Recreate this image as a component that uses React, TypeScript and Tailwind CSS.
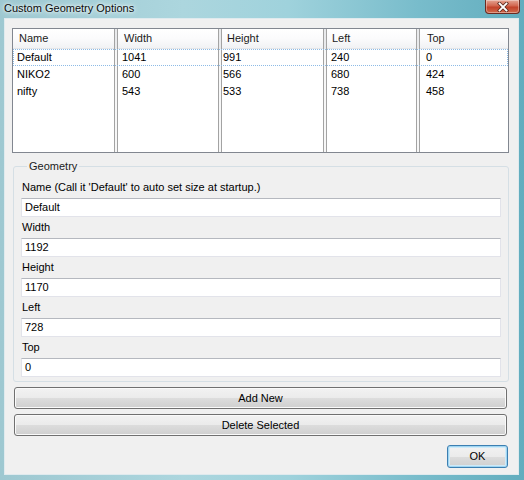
import React from "react";

const cols = [
  { name: "Name", w: "w-[101px]", hp: "pl-[6px]", dp: "pl-[4px]" },
  { name: "Width", w: "w-[100px]", hp: "pl-[6px]", dp: "pl-[4px]" },
  { name: "Height", w: "w-[101px]", hp: "pl-[5px]", dp: "pl-[1px]" },
  { name: "Left", w: "w-[89px]", hp: "pl-[5px]", dp: "pl-[4px]" },
  { name: "Top", w: "w-[88px]", hp: "pl-[7px]", dp: "pl-[6px]" },
];

const rows = [
  ["Default", "1041", "991", "240", "0"],
  ["NIKO2", "600", "566", "680", "424"],
  ["nifty", "543", "533", "738", "458"],
];

const fields = [
  ["Name (Call it 'Default' to auto set size at startup.)", "Default"],
  ["Width", "1192"],
  ["Height", "1170"],
  ["Left", "728"],
  ["Top", "0"],
];

const btn =
  "flex items-center justify-center rounded-[3px] border border-[#707070] bg-[linear-gradient(to_bottom,#f2f2f2_0%,#ebebeb_50%,#dddddd_50%,#cfcfcf_100%)] shadow-[inset_0_0_0_1px_#fafafa] text-[#000]";

export default function App() {
  return (
    <div
      className="w-[524px] h-[480px] flex flex-col overflow-hidden bg-[linear-gradient(90deg,#9ec8d1_0%,#acd6de_35%,#9fd2dc_55%,#78bccb_80%,#62adbe_100%)] text-[11px] leading-none text-black"
      style={{ fontFamily: '"Liberation Sans", Arial, sans-serif' }}
    >
      {/* title bar */}
      <div className="h-[18px] flex items-start shrink-0">
        <div className="pl-[4px] pt-[2px] text-[11px] leading-[12px] text-[#0b0b0b] [text-shadow:0_0_6px_#ffffff,0_0_3px_#ffffff]">
          Custom Geometry Options
        </div>
        <div className="flex-1" />
        <div className="mr-[4px] w-[35px] h-[14px] rounded-b-[4px] border border-t-0 border-[#6b2a20] bg-[linear-gradient(to_bottom,#e4a594_0%,#d2664f_45%,#c2432b_55%,#cf6a4c_100%)] shadow-[inset_0_0_0_1px_rgba(255,255,255,0.35)] flex items-center justify-center">
          <svg width="12" height="10" viewBox="0 0 12 10">
            <path d="M2.5 1.5 L9.5 8.5 M9.5 1.5 L2.5 8.5" stroke="#5a2a20" strokeWidth="3.4" strokeLinecap="square" />
            <path d="M2.5 1.5 L9.5 8.5 M9.5 1.5 L2.5 8.5" stroke="#ffffff" strokeWidth="1.8" strokeLinecap="square" />
          </svg>
        </div>
      </div>

      {/* client area */}
      <div className="ml-[4px] mb-[5px] w-[515px] flex-1 border border-[#dfeaee] bg-[#f0f0f0] flex flex-col">
        {/* list view */}
        <div className="relative ml-[7px] mt-[9px] w-[497px] h-[125px] border border-[#828790] bg-white flex">
          {cols.map((c, i) => (
            <React.Fragment key={c.name}>
              <div className={`${c.w} flex flex-col`}>
                <div className={`h-[20px] ${c.hp} flex items-center border-b border-[#e3e5e8] bg-[linear-gradient(to_bottom,#ffffff_0%,#fbfbfc_50%,#f1f2f4_100%)] text-[#1b1b1b]`}>
                  {c.name}
                </div>
                {rows.map((r, j) => (
                  <div key={j} className={`h-[17px] ${c.dp} flex items-center`}>
                    {r[i]}
                  </div>
                ))}
              </div>
              {i < cols.length - 1 && (
                <div className="w-[4px] border-x border-[#a3a3a3] flex flex-col">
                  <div className="h-[20px] bg-[#e9eaec]" />
                  <div className="flex-1 bg-[#f7f7f7]" />
                </div>
              )}
            </React.Fragment>
          ))}
          <div className="absolute left-0 right-0 top-[20px] h-[17px] border border-dotted border-[#8dbbe6]" />
        </div>

        {/* group box */}
        <fieldset className="ml-[8px] mt-[6px] w-[496px] rounded-[3px] border border-[#d5dfe5] px-[7px] pb-[4px]">
          <legend className="ml-[6px] px-[2px] h-[14px] leading-[14px] text-[#1b1b1b]">Geometry</legend>
          <div className="pt-[4px] flex flex-col">
            {fields.map(([label, value]) => (
              <React.Fragment key={label}>
                <div className="h-[21px] flex items-center pl-[1px]">{label}</div>
                <div className="h-[19px] w-[480px] bg-white border border-[#e2e3ea] border-t-[#b5b8bf] flex items-center pl-[3px]">
                  {value}
                </div>
              </React.Fragment>
            ))}
          </div>
        </fieldset>

        {/* buttons */}
        <div className={`${btn} ml-[9px] mt-[5px] w-[493px] h-[22px]`}>Add New</div>
        <div className={`${btn} ml-[9px] mt-[5px] w-[493px] h-[22px]`}>Delete Selected</div>
        <div className="flex justify-end pr-[10px] mt-[9px]">
          <div className="w-[61px] h-[23px] flex items-center justify-center rounded-[3px] border border-[#3c7fb1] bg-[linear-gradient(to_bottom,#f2f2f2_0%,#ebebeb_50%,#dddddd_50%,#cfcfcf_100%)] shadow-[inset_0_0_0_1px_#9fd5f2,inset_0_0_0_2px_#cfeaf8]">
            OK
          </div>
        </div>
      </div>
    </div>
  );
}
